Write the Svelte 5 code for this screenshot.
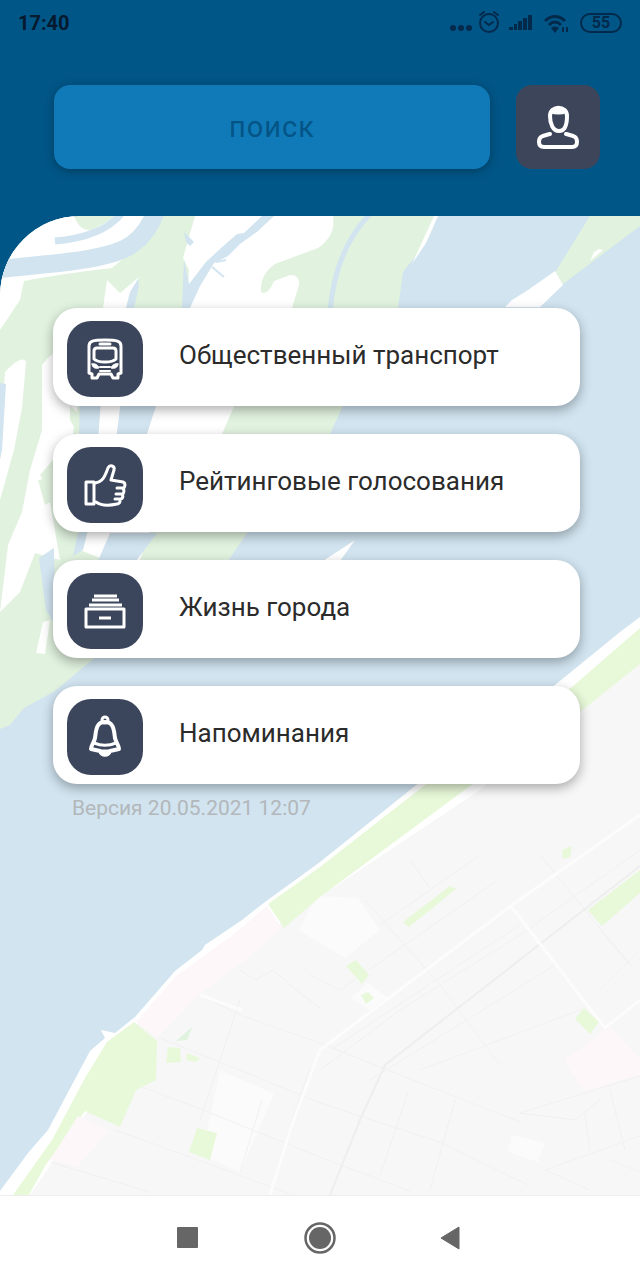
<!-- App.svelte -->
<script>
  let query = $state("");

  const menu = [
    { id: "transport", title: "Общественный транспорт" },
    { id: "votes", title: "Рейтинговые голосования" },
    { id: "city", title: "Жизнь города" },
    { id: "reminders", title: "Напоминания" },
  ];

  // side streets of the map
  const streets = [
    "M640 850L520 935L400 1010L320 1070",
    "M240 970L255 980L273 970L300 993L320 1008",
    "M190 990L240 1015L320 1043L400 1075L520 1122",
    "M160 1038L220 1062L320 1103L440 1142L530 1186",
    "M115 1130L190 1157L290 1194",
    "M142 1087L203 1110L320 1157L410 1191",
    "M50 1162L150 1192",
    "M240 1000L215 1075L200 1120",
    "M262 1100L240 1172M310 1068L282 1150L270 1195",
    "M365 900L440 985L500 1065",
    "M410 860L430 888M540 855L585 910L635 970",
    "M480 855L380 925M495 882L340 990L310 975",
    "M520 925L330 1050M555 965L370 1080M580 1010L420 1070",
    "M455 1100L430 1190M408 1093L380 1175",
    "M640 1076L520 1113L575 1120L600 1100",
    "M610 1090L625 1150M585 1115L590 1150",
    "M640 1136L545 1170L590 1190M610 1160L640 1172",
    "M640 950L600 990M600 930L630 965",
  ];
</script>

<div class="screen">
  <div class="status-bar">
    <span class="clock">17:40</span>
    <div class="status-icons">
      <svg width="84" height="24" viewBox="0 0 84 24" aria-hidden="true">
        <g fill="currentColor">
          <circle cx="5" cy="17" r="3" />
          <circle cx="13" cy="17" r="3" />
          <circle cx="21" cy="17" r="3" />
          <path d="M61 19v-3h4v3zM66 19v-6h3v6zM70 19v-9h4v9zM75 19v-12h4v12zM80 19V4h4v15z" />
        </g>
        <g fill="none" stroke="currentColor" stroke-width="2" stroke-linecap="round">
          <circle cx="41" cy="12" r="9" />
          <path d="M37 11l4 3 4-3M32 4l4-3M46 1l4 3" />
        </g>
      </svg>
      <svg width="24" height="20" viewBox="0 0 24 20" aria-hidden="true">
        <g fill="none" stroke="currentColor" stroke-width="3">
          <path d="M1 8c6-6 14-6 20 0M5 12c4-4 8-4 12 0" />
        </g>
        <path d="M7 15c3-2 5-2 8 0l-4 5zM18 14h2v5h-2zM22 14h2v5h-2z" fill="currentColor" />
      </svg>
      <span class="battery">55</span>
    </div>
  </div>

  <header class="top">
    <input
      class="search"
      type="text"
      placeholder="поиск"
      aria-label="поиск"
      bind:value={query}
    />
    <button class="profile" type="button" aria-label="Профиль">
      <svg width="44" height="46" viewBox="0 0 44 46" fill="none" stroke="#fff" stroke-width="4" stroke-linecap="round" stroke-linejoin="round">
        <path d="M14 12c0-11 17-11 17 0 0 8-2 15-8 15s-9-7-9-15z" />
        <path d="M15 8c3-5 13-5 15 0-4 2-11 2-15 0z" fill="#fff" stroke-width="2" />
        <path d="M14 30c-7 2-11 2-11 8 0 4 2 5 5 5h28c4 0 5-2 5-5 0-6-4-6-11-8" />
      </svg>
    </button>
  </header>

  <main class="content">
    <svg class="map" viewBox="0 216 640 979" preserveAspectRatio="xMidYMin slice" aria-hidden="true">
      <rect y="216" width="640" height="979" fill="#d1e4f0" />

      <!-- islands -->
      <path fill="#e1f2df" d="M0 216H438L426 243L403 272L398 308L343 406L330 434L247 533L228 561L92 660L55 691L24 708L10 725L0 729Z" />
      <g fill="#fff">
        <path d="M438 216L426 243L412 264L434 216Z" />
        <path d="M0 216H74Q80 232 92 230L117 216H158L145 240L112 268Q60 274 24 281L20 300L0 330Z" />
        <path d="M107 280L120 293L139 277L126 308H103Z" />
        <path d="M195 216H333Q336 236 318 248L275 264Q260 274 261 292Q268 296 274 281L290 275Q300 275 299 285L292 308L250 370L222 434L160 500L140 560H105L80 550L86 434L110 370L150 340L187 308L189 270L183 258Z" />
        <path d="M5 372Q22 354 26 362L22 408L14 450L0 500V440Z" />
        <path d="M42 365Q52 350 64 352L78 406L72 438L40 475L48 490L60 560L35 553L20 592L0 612L8 545L22 512L30 470L42 430Z" />
        <path d="M50 620L45 654L36 653L43 622Z" />
      </g>
      <path fill="#e1f2df" d="M70 406L80 415L78 434L70 420ZM38 480L50 478L54 500L45 505ZM152 561L170 533H246L228 561Z" />
      <g fill="#d1e4f0">
        <path d="M80 400H101L98 440H79ZM121 400H158L145 440H116Z" />
        <path d="M0 383L6 384L2 450L0 460Z" />
        <path d="M78 533L88 530L83 550L73 556ZM110 533H157L136 561H98Z" />
        <path d="M39 558L54 548L55 625L46 610Z" />
        <path d="M182 308L184 260L189 284L206 262L220 249L237 234L244 233L262 216H274L258 231L240 244L228 256L214 263L200 286L190 308Z" />
        <path d="M126 308L130 292L138 279L139 286L134 308Z" />
        <path d="M184 232L194 242L190 246L186 242Z" />
      </g>
      <g fill="none" stroke="#d1e4f0">
        <path d="M2 269C50 263 95 262 124 249Q147 238 157 208" stroke-width="18" />
        <path d="M55 241Q102 237 121 214" stroke-width="7" />
        <path d="M370 214Q335 250 330 312" stroke-width="5" />
        <path d="M212 267L224 277M216 262L226 260" stroke-width="2" />
      </g>

      <path fill="#e1f2df" d="M590 216H640V226L563 284L554 274Z" />
      <path fill="#fff" d="M555 271L563 285L540 307H505L512 300L528 290ZM603 250L590 261L594 252L599 249ZM355 540L340 561L323 561Z" />

      <!-- right bank -->
      <path fill="#fff" d="M640 617L620 632L555 685L425 778L320 862L265 902L242 920L205 945L202 950L175 971L135 1017L115 1033L101 1030L105 1038L90 1051L48 1130L28 1153L0 1191V1195H640Z" />
      <path fill="#f7f7f7" d="M640 650L480 790L285 920L140 1020L87 1112L30 1195H640Z" />
      <g fill="#fbfbfb">
        <path d="M318 896L358 898L380 930L345 958L298 930Z" />
        <path d="M220 1070L274 1094L240 1172L202 1155Z" />
        <path d="M512 1135L545 1143L538 1162L508 1152Z" />
        <path d="M350 998L368 983L388 998L370 1010Z" />
      </g>
      <g fill="none" stroke="#f1f1f1" stroke-width="1">
        {#each streets as d}
          <path {d} />
        {/each}
      </g>
      <path d="M640 866L385 1065L360 1120L330 1195" fill="none" stroke="#eee" stroke-width="2" />
      <path d="M640 815L512 905L320 1050L290 1130L270 1195M510 905L605 1028L640 1000M200 995L242 1010" fill="none" stroke="#fcfcfc" stroke-width="3" />
      <g fill="#e8f9d9">
        <path d="M640 628L572 687L425 785L320 867L268 904L284 928L320 897L470 786L585 708L640 664Z" />
        <path d="M134 1022L157 1041L156 1080L136 1090L120 1127L85 1111L45 1166L29 1195H13L52 1140L85 1078L107 1042Z" />
        <path d="M197 1128L217 1133L210 1160L189 1152Z" />
        <path d="M168 1047L180 1048L181 1062L166 1063ZM187 1053L200 1058L196 1062L186 1060Z" />
        <path d="M346 966L356 960L369 975L362 984Z" />
        <path d="M361 995L368 992L374 998L366 1004Z" />
        <path d="M403 922L450 886L456 889L409 927Z" />
        <path d="M562 850L572 846L570 857L563 859Z" />
        <path d="M588 910L640 870V893L602 926Z" />
        <path d="M575 1019L584 1008L599 1022L590 1034Z" />
      </g>
      <path fill="#dff3df" d="M176 1041L192 1027L187 1040Z" />
      <g fill="#fdf7f9">
        <path d="M267 906L282 928L250 956L195 998L158 1037L136 1022L176 976L230 937Z" />
        <path d="M78 1116L109 1131L77 1167L50 1160Z" />
        <path d="M610 1027L640 1058V1075L583 1091L564 1060Z" />
      </g>
    </svg>

    <nav class="menu">
      {#each menu as item}
        <a class="card" href="#{item.id}">
          <span class="tile">
            <svg width="44" height="44" viewBox="0 0 44 44" fill="none" stroke="#fff" stroke-width="3" stroke-linecap="round" stroke-linejoin="round" aria-hidden="true">
              {#if item.id === "transport"}
                <path d="M6 9c0-5 4-6 16-6s16 1 16 6v27l-3 1v4h-5l-2-4H16l-2 4H9v-4l-3-1z" />
                <path d="M17 7h10" />
                <path d="M11 14c0-2 1-3 3-3h16c2 0 3 1 3 3v8c-4 4-18 4-22 0z" />
                <path d="M9 27c3-1 6 1 7 4-3 1-7 0-7-4zM35 27c-3-1-6 1-7 4 3 1 7 0 7-4z" fill="#fff" stroke-width="1" />
                <path d="M17 30h10M17 34h10" stroke-width="2" />
              {:else if item.id === "votes"}
                <path d="M3 19h8v22H3z" />
                <path d="M12 20c8-1 10-7 13-15 2-4 7-2 6 2l-3 10 12 2c3 1 2 6 0 6h-6 5c3 1 2 6 0 6h-6 5c3 1 2 5-1 5h-5 4c2 1 1 5-2 5-9 2-17 1-21-2" />
              {:else if item.id === "city"}
                <path d="M3 20h38v18H3z" />
                <path d="M16 29h12M11 7h23M9 11h27M6 16h33" stroke-linecap="butt" />
              {:else}
                <path d="M22 7c-9 0-9 9-10 16-1 5-4 7-4 11l9 2c2 5 8 5 10 0l9-2c0-4-3-6-4-11-1-7-1-16-10-16z" stroke-width="4" />
                <path d="M11 28c7 3 15 3 22 0" />
                <path d="M17 36c3 5 7 5 10 0z" fill="#fff" />
                <circle cx="22" cy="5" r="3" />
              {/if}
            </svg>
          </span>
          <span class="title">{item.title}</span>
        </a>
      {/each}
    </nav>
    <p class="version">Версия 20.05.2021 12:07</p>
  </main>

  <footer class="system-nav">
    <button type="button" aria-label="Недавние">
      <svg width="32" height="32" viewBox="0 0 32 32"><rect x="5" y="5" width="21" height="21" rx="1" fill="#666" /></svg>
    </button>
    <button type="button" aria-label="Домой">
      <svg width="32" height="32" viewBox="0 0 32 32">
        <circle cx="16" cy="16" r="14.5" fill="none" stroke="#666" stroke-width="2.5" />
        <circle cx="16" cy="16" r="11" fill="#666" />
      </svg>
    </button>
    <button type="button" aria-label="Назад">
      <svg width="32" height="32" viewBox="0 0 32 32"><path d="M5 16L23 5v22z" fill="#666" stroke="#666" stroke-linejoin="round" /></svg>
    </button>
  </footer>
</div>

<style>
  :global(body) {
    margin: 0;
    background: #005687;
  }

  .screen {
    display: flex;
    flex-direction: column;
    min-height: 100vh;
    background: #005687;
    font-family: Roboto, "Liberation Sans", sans-serif;
  }

  .status-bar {
    display: flex;
    justify-content: space-between;
    align-items: center;
    height: 46px;
    padding: 0 18px;
    color: #03294b;
  }

  .clock {
    font-size: 20px;
    font-weight: 700;
    color: #06192f;
  }

  .status-icons {
    display: flex;
    align-items: center;
    gap: 12px;
  }

  .battery {
    box-sizing: border-box;
    width: 42px;
    height: 20px;
    border: 2px solid currentColor;
    border-radius: 10px;
    font-size: 16px;
    font-weight: 700;
    line-height: 16px;
    text-align: center;
  }

  .top {
    display: flex;
    gap: 26px;
    padding: 39px 40px 47px 54px;
  }

  .search {
    box-sizing: border-box;
    flex: 1;
    min-width: 0;
    height: 84px;
    padding: 0 20px;
    border: none;
    border-radius: 16px;
    background: #107ab8;
    box-shadow: 0 2px 10px rgba(0, 0, 0, 0.3);
    color: #045486;
    font-family: inherit;
    font-size: 29px;
    letter-spacing: 1px;
    text-align: center;
  }

  .search::placeholder {
    color: #045486;
    opacity: 1;
  }

  .profile {
    display: flex;
    align-items: center;
    justify-content: center;
    width: 84px;
    height: 84px;
    padding: 0;
    border: none;
    border-radius: 16px;
    background: #3d455b;
    cursor: pointer;
  }

  .content {
    position: relative;
    flex: 1;
    padding: 92px 60px 40px 53px;
    border-top-left-radius: 80px;
    overflow: hidden;
  }

  .map {
    position: absolute;
    inset: 0;
    width: 100%;
    height: 100%;
  }

  .menu {
    position: relative;
    display: flex;
    flex-direction: column;
    gap: 28px;
  }

  .card {
    display: flex;
    align-items: center;
    gap: 36px;
    box-sizing: border-box;
    min-height: 98px;
    padding: 13px 14px 9px;
    border-radius: 24px;
    background: #fff;
    box-shadow: 0 4px 12px rgba(0, 0, 0, 0.32);
    color: #2b2b2b;
    text-decoration: none;
  }

  .tile {
    display: flex;
    flex: none;
    align-items: center;
    justify-content: center;
    width: 76px;
    height: 76px;
    border-radius: 24px;
    background: #3b455b;
  }

  .title {
    padding-bottom: 8px;
    font-size: 26px;
    line-height: 32px;
  }

  .version {
    position: relative;
    margin: 12px 0 0;
    padding-left: 19px;
    color: #b3b7ba;
    font-size: 21px;
    line-height: 24px;
  }

  .system-nav {
    display: flex;
    justify-content: center;
    gap: 100px;
    padding: 26px 0;
    border-top: 1px solid #eee;
    background: #fff;
  }

  .system-nav button {
    display: flex;
    padding: 0;
    border: none;
    background: none;
    cursor: pointer;
  }
</style>
